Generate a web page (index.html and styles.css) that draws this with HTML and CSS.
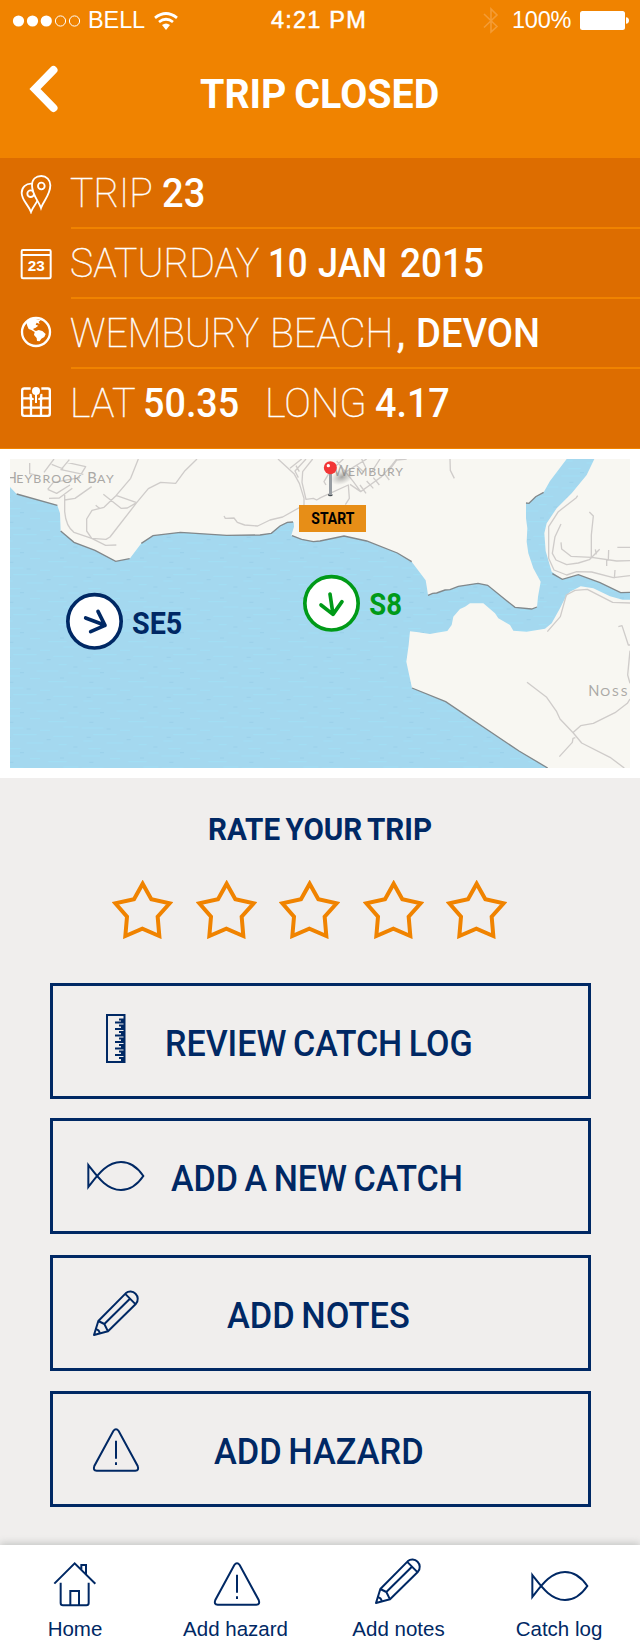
FILE: index.html
```html
<!DOCTYPE html>
<html lang="en">
<head>
<meta charset="utf-8">
<title>Trip closed</title>
<link rel="stylesheet" href="styles.css">
</head>
<body>
<svg class="defs" aria-hidden="true">
  <symbol id="star" viewBox="66 240 183 178"><path d="M158 251L184 298 239 310 203 350 208 408 157 386 106 408 111 350 76 310 132 298Z" fill="none" stroke="#f08300" stroke-width="12"/></symbol>
  <symbol id="pencil" viewBox="162 84 144 144"><g fill="none" stroke="currentColor" stroke-width="6" stroke-linejoin="round"><path d="M181 180L263 97A22 22 0 0 1 294 128L210 211 168 222ZM261 98L293 130M275 114L199 189M181 180L199 189 210 211M173 205Q184 206 185 217"/></g></symbol>
  <symbol id="hazard" viewBox="639 94 144 138"><g fill="none" stroke="currentColor" stroke-width="6"><path d="M703 106Q711 95 719 106L776 211Q781 225 769 225H653Q641 225 646 211ZM711 135V189M711 200V208"/></g></symbol>
  <symbol id="fish" viewBox="632 120 174 96"><path d="M636 135V201C662 168 690 126 734 126C766 126 786 146 801 168C786 190 766 210 734 210C690 210 662 168 636 135Z" fill="none" stroke="currentColor" stroke-width="6"/></symbol>
  <symbol id="home" viewBox="160 92 132 138"><path d="M164 160L225 99 287 160M245 118V104H259V131M183 157V218Q183 225 190 225H260Q267 225 267 218V157M212 225V182H238V225" fill="none" stroke="currentColor" stroke-width="6"/></symbol>
</svg>

<header class="top">
  <div class="status">
    <svg class="signal" width="70" height="14" viewBox="0 0 70 14"><g fill="#fff"><circle cx="6.500" cy="7" r="5.600"/><circle cx="20.500" cy="7" r="5.600"/><circle cx="34.300" cy="7" r="5.600"/></g><g fill="none" stroke="#fff"><circle cx="48.500" cy="7" r="5.100"/><circle cx="62.500" cy="7" r="5.100"/></g></svg>
    <span class="carrier">BELL</span>
    <svg class="wifi" width="24" height="18" viewBox="0 0 24 18"><g fill="none" stroke="#fff" stroke-width="2.800"><path d="M1 5.800Q12 -2.800 23 5.800M5 10Q12 4.600 19 10"/></g><path d="M8 13Q12 10 16 13L12 18Z" fill="#fff"/></svg>
    <span class="time">4:21 PM</span>
    <svg class="bluetooth" width="16" height="28" viewBox="0 0 16 28"><path d="M1 7L14 19.500 8 25V2L14 8 1 20.500" fill="none" stroke="#f49c35" stroke-width="1.600"/></svg>
    <span class="level">100%</span>
    <svg class="battery" width="50" height="19" viewBox="0 0 50 19"><rect width="45" height="19" rx="2.500" fill="#fff"/><path d="M46 6.200Q49 6.500 49 9.500T46 12.800Z" fill="#fff"/></svg>
  </div>
  <div class="titlebar">
    <svg class="back" width="32" height="50" viewBox="28 64 32 50"><path d="M53.500 70L35 89 53.500 108" fill="none" stroke="#fff" stroke-width="8" stroke-linecap="round"/></svg>
    <h1 class="title">TRIP CLOSED</h1>
  </div>
</header>

<section class="info">
  <div class="row">
    <svg class="row-icon i-pins" width="32" height="40" viewBox="60 57 96 120"><g fill="#dd6d00" stroke="#fff" stroke-width="5.500"><path d="M93 171C86 150 65 136 65 114C65 96 78 86 93 86C108 86 120 97 120 114C120 136 100 150 93 171Z"/><circle cx="92" cy="116" r="10"/><path d="M123 159C116 138 96 120 96 91C96 73 108 63 124 63C139 63 151 75 151 91C151 120 130 138 123 159Z"/><circle cx="124" cy="93" r="10"/></g></svg>
    <p class="row-text"><span class="w-trip">TRIP</span><b class="w-23">23</b></p>
  </div>
  <div class="row">
    <svg class="row-icon i-cal" width="32" height="32" viewBox="58 278 96 96"><g fill="none" stroke="#fff" stroke-width="6"><rect x="63" y="284" width="87" height="85" rx="4"/><path d="M63 299H150"/></g><text class="cal-num" x="81" y="348" textLength="51" lengthAdjust="spacingAndGlyphs">23</text></svg>
    <p class="row-text"><span class="w-sat">SATURDAY</span><b class="w-10">10</b><b class="w-jan">JAN</b><b class="w-2015">2015</b></p>
  </div>
  <div class="row">
    <svg class="row-icon i-globe" width="32" height="32" viewBox="57 482 96 96"><circle cx="105" cy="530" r="42" fill="none" stroke="#fff" stroke-width="7"/><path d="M76 502Q88 489 102 490L119 495 113 499 116 506 107 502 104 508 112 511 104 517 97 520 98 524 105 527 113 524 124 527 134 536 130 545 121 550 116 558 108 557 107 548 99 539 101 530 91 524 83 521 79 512Z" fill="#fff"/></svg>
    <p class="row-text"><span class="w-wem">WEMBURY</span><span class="w-beach">BEACH<i class="comma">,</i></span><b class="w-devon">DEVON</b></p>
  </div>
  <div class="row">
    <svg class="row-icon i-grid" width="32" height="32" viewBox="57 693 96 96"><g fill="none" stroke="#fff" stroke-width="7"><rect x="63.500" y="700.500" width="83" height="82" rx="6"/><path d="M63 730H147M63 758H147M90 716V783M120 716V783"/></g><path d="M89 694H121V716L111 738V747H99V738L89 716Z" fill="#dd6d00"/><circle cx="105" cy="708" r="12" fill="#fff"/><path d="M105 708V744" stroke="#fff" stroke-width="6"/><path d="M89 717V732H98M121 717V732H112" fill="none" stroke="#fff" stroke-width="6"/></svg>
    <p class="row-text"><span class="w-lat">LAT</span><b class="w-50">50.35</b><span class="w-long">LONG</span><b class="w-417">4.17</b></p>
  </div>
</section>

<section class="map-frame">
  <svg class="map" width="620" height="309" viewBox="30 42 1860 927">
    <defs>
      <pattern id="waves" width="240" height="120" patternUnits="userSpaceOnUse">
        <rect width="240" height="120" fill="#a4d8ef"/>
        <path d="M5 9H70M120 16H150M190 6H235M40 29H110M160 34H220M10 48H38M80 54H130M176 59H200M25 71H62M110 78H175M205 84H236M4 93H60M90 101H120M145 110H200" stroke="#a2dff6" stroke-width="3" fill="none"/>
        <path d="M80 12H92M20 37H32M140 44H152M60 83H72M220 66H232M180 99H192M28 112H40" stroke="#9ad0ea" stroke-width="3" fill="none"/>
      </pattern>
      <radialGradient id="shade"><stop offset="0" stop-color="#555" stop-opacity=".5"/><stop offset="1" stop-color="#777" stop-opacity="0"/></radialGradient>
    </defs>
    <rect x="30" y="42" width="1860" height="927" fill="url(#waves)"/>
    <g fill="#f8f7f2">
      <path d="M30 42V126L50 147 172 181 180 205 182 258 222 292 285 316 347 349 389 341 424 295 459 272 541 262 680 271 780 270 814 265 840 243 862 232 881 231 882 245 874 271 905 283 940 290 960 288 1032 273 1100 288 1192 324 1235 350 1277 406 1281 430 1284 451 1298 445 1310 444 1335 435 1350 434 1375 424 1434 415 1463 421 1520 467 1545 487 1595 492 1611 486 1614 455 1622 410 1600 370 1585 325 1580 290 1582 250 1578 220V174L1587 175 1607 155 1631 142 1650 108 1700 42Z"/>
      <path d="M1783 42L1760 90 1715 145 1670 190 1640 235 1633 265 1637 318 1655 380 1687 403 1735 389 1800 413 1862 443 1890 442V42Z"/>
      <path d="M1890 464L1868 464 1830 454 1780 430 1742 424 1710 440 1695 460 1680 490 1655 535 1635 551 1580 560 1540 557 1530 540 1495 520 1485 505 1450 475H1410L1395 485 1380 492 1360 515 1355 540 1342 558 1310 563 1290 567 1255 562 1230 559 1226 600 1219 650 1236 729 1337 770 1557 918 1643 969H1890Z"/>
    </g>
    <g fill="none" stroke="#82888b" stroke-width="4">
      <path d="M50 147L172 181M182 258L222 292 285 316 347 349 389 341M424 295L459 272 541 262 680 271 780 270 814 265 840 243 862 232 879 231M876 272L905 283 940 290 960 288 1032 273 1100 288 1192 324 1235 350M1284 451L1298 445 1310 444 1335 435 1350 434 1375 424 1434 415 1463 421 1520 467 1545 487 1595 492 1611 486M1578 174L1587 175 1607 155 1631 142M1657 386L1687 403 1735 389 1800 413 1862 443 1890 442M1236 729L1337 770 1557 918 1643 969"/>
    </g>
    <g fill="none" stroke="#cfccca" stroke-width="4" stroke-linejoin="round">
      <path d="M415 42L392 100 348 152 312 187 276 196 260 222V258L275 280 318 283 330 276 410 173 445 131 482 112 527 115 555 77 591 42M275 280L317 301 349 300M310 148L363 190 382 189 410 173 350 152M287 181L300 191"/>
      <path d="M194 150V200Q198 245 222 262L275 280M194 165L225 160 275 125M147 160L178 159 217 130M162 42L132 82M208 44L183 74 250 88M155 58L190 72M200 52L257 65 243 88M89 54V86L115 92M143 133L160 112 240 98M143 133L170 145 210 120"/>
      <path d="M672 213L676 220 702 219 712 232 734 240 773 243 810 225 848 216 912 180M834 42L882 86 898 115 912 160 912 180M895 98L885 78 918 42M870 70L905 42M898 80L888 62M938 42L908 80 906 112 918 163 940 160 950 165 962 158M978 120L972 110 985 88 1005 65 1030 42M962 158L1045 120 1048 160 1036 179M1010 48L1060 110 1082 140M1030 85L1100 42M1050 118L1082 140 1110 120 1145 95 1176 60 1190 42M1080 120L1098 145M1100 108L1120 130M1120 98L1138 120M1150 82L1168 105M1085 42L1098 70M1068 60L1092 82M1140 42L1112 85M1166 78L1190 45 1220 42M1350 42L1351 76 1363 100"/>
      <path d="M1733 152L1729 158 1675 200 1646 245V340L1662 375 1700 390 1730 380 1775 381 1840 398 1890 392M1683 237L1665 275 1657 325 1668 345 1700 359 1735 354 1768 344 1799 313M1683 292L1685 312 1713 334 1775 337 1850 348 1890 347M1768 201L1780 213 1774 270 1774 335M1786 313L1789 328M1826 315L1825 345 1820 346 1820 363M1845 375L1843 400M1852 307H1890M1642 560L1681 515 1699 450 1725 436 1762 433 1838 472 1890 474M1855 545L1866 542 1885 600H1890M1890 617L1883 690 1890 715M1581 712L1640 757 1670 800 1680 822 1720 864 1745 894 1830 937 1873 969M1720 862L1742 842 1780 835 1845 803 1882 775 1890 762M1726 878L1719 880 1717 892 1678 935"/>
    </g>
    <g class="place">
      <text x="17" y="114" font-size="44">H</text><text x="49" y="114" font-size="37" textLength="195">EYBROOK</text><text x="262" y="114" font-size="44">B</text><text x="291" y="114" font-size="37" textLength="50">AY</text>
      <text x="1000" y="94" font-size="44">W</text><text x="1044" y="94" font-size="37" textLength="165">EMBURY</text>
      <text x="1765" y="753" font-size="44">N</text><text x="1801" y="753" font-size="37" textLength="81">OSS</text>
    </g>
    <ellipse cx="1026" cy="96" rx="36" ry="22" fill="url(#shade)" transform="rotate(-20 1026 96)"/>
    <ellipse cx="991" cy="150" rx="7" ry="4" fill="#444b50"/>
    <rect x="987" y="84" width="9" height="66" fill="#989da2"/>
    <circle cx="991" cy="68" r="19.500" fill="#f23636"/><circle cx="985" cy="62" r="5" fill="#fff"/>
    <rect x="897" y="180" width="201" height="81" fill="#e78e17"/>
    <text class="start" x="934" y="238" textLength="129" lengthAdjust="spacingAndGlyphs">START</text>
    <g fill="none" stroke="#002864" stroke-width="11" stroke-linecap="round" stroke-linejoin="round"><circle cx="283.500" cy="529" r="80" fill="#fff"/><path d="M257 519L315 541M294 499L315 541 272 560"/></g>
    <text class="wind navy" x="396" y="567" textLength="151" lengthAdjust="spacingAndGlyphs">SE5</text>
    <g fill="none" stroke="#009a18" stroke-width="11" stroke-linecap="round" stroke-linejoin="round"><circle cx="994.500" cy="475" r="80" fill="#fff"/><path d="M990 447L999 508M963 480L999 508 1026 470"/></g>
    <text class="wind green" x="1108" y="510" textLength="98" lengthAdjust="spacingAndGlyphs">S8</text>
  </svg>
</section>

<main class="actions">
  <h2 class="rate">RATE YOUR TRIP</h2>
  <div class="stars">
    <svg><use href="#star"/></svg><svg><use href="#star"/></svg><svg><use href="#star"/></svg><svg><use href="#star"/></svg><svg><use href="#star"/></svg>
  </div>
  <div class="buttons">
    <a class="btn b-review"><svg class="i-ruler" width="20" height="49" viewBox="0 0 20 49"><path d="M1 1H18.500V48H1Z" fill="none" stroke="#002864" stroke-width="2"/><path d="M13 5.500H18M9 8.500H18M13 11.500H18M9 15H18M13 18H18M9 21.500H18M13 24.500H18M9 28H18M13 31H18M9 34.500H18M13 37.500H18M9 41H18M13 44H18M15 7H18M15 13.300H18M15 19.700H18M15 26.300H18M15 33H18M15 39.300H18M15 46H18" stroke="#002864" stroke-width="1.800"/></svg><span>REVIEW CATCH LOG</span></a>
    <a class="btn b-catch"><svg class="i-fish"><use href="#fish"/></svg><span>ADD A NEW CATCH</span></a>
    <a class="btn b-notes"><svg class="i-pencil"><use href="#pencil"/></svg><span>ADD NOTES</span></a>
    <a class="btn b-hazard"><svg class="i-hazard"><use href="#hazard"/></svg><span>ADD HAZARD</span></a>
  </div>
</main>

<nav class="tabs">
  <a class="tab t-home"><svg class="n-home"><use href="#home"/></svg><span>Home</span></a>
  <a class="tab t-hazard"><svg class="n-hazard"><use href="#hazard"/></svg><span>Add hazard</span></a>
  <a class="tab t-notes"><svg class="n-pencil"><use href="#pencil"/></svg><span>Add notes</span></a>
  <a class="tab t-log"><svg class="n-fish"><use href="#fish"/></svg><span>Catch log</span></a>
</nav>
</body>
</html>
```
FILE: styles.css
```css
* { box-sizing: border-box; }
body {
  margin: 0;
  width: 640px;
  height: 1643px;
  display: flex;
  flex-direction: column;
  background: #f0eeed;
  font-family: Roboto, "Liberation Sans", sans-serif;
  overflow: hidden;
}
svg { display: block; flex: none; }
.defs { position: absolute; width: 0; height: 0; }
h1, h2, p { margin: 0; }

.top { height: 158px; background: #f08300; color: #fff; flex: none; }
.status {
  height: 41px;
  display: flex;
  align-items: center;
  padding-left: 12px;
  font: 23.5px/41px "Liberation Sans", Arial, sans-serif;
  white-space: nowrap;
}
.carrier { width: 66px; padding-left: 6px; letter-spacing: -0.1px; }
.wifi { margin-left: 6px; }
.time { width: 96px; margin-left: 93px; font-size: 23.5px; letter-spacing: 1.2px; -webkit-text-stroke: 0.5px #fff; }
.bluetooth { margin-left: 116px; }
.level { width: 67px; padding-left: 13px; font-size: 23.5px; letter-spacing: -0.2px; }
.battery { margin-left: 14px; }

.title, .rate, .btn span, .row-text span, .row-text b { transform-origin: 0 50%; }

.titlebar { height: 117px; display: flex; align-items: flex-start; padding: 23px 0 0 28px; }
.title { margin: 6px 0 0 140px; font-size: 41px; line-height: 48px; font-weight: 700; transform: scaleX(0.96); word-spacing: -2px; white-space: nowrap; }

.info { height: 291px; background: #dd6d00; border-bottom: 1px solid #f08300; flex: none; color: #fff; }
.row { height: 70px; display: flex; align-items: center; padding-left: 20px; }
.row-icon { width: 32px; margin-right: 18px; }
.i-pins, .i-cal { margin-top: 2px; }
.i-globe, .i-grid { margin-bottom: 2px; }
.row-text {
  flex: 1;
  height: 71px;
  margin-left: 1px;
  border-bottom: 2px solid #f08300;
  display: flex;
  font-size: 41px;
  line-height: 71px;
  font-weight: 100;
  white-space: nowrap;
}
.row:last-child .row-text { border-bottom-color: transparent; }
.row-text b { font-weight: 500; transform: scaleX(0.93); }
.row-text span { transform: scaleX(0.955); -webkit-text-stroke: 0.4px #fff; }
.row-text span, .row-text b { flex: none; }
.row-text > :first-child { margin-left: -1px; }
.row-text .w-trip { width: 92px; }
.row-text .w-sat { width: 198px; }
.row-text .w-10 { width: 50px; transform: scaleX(0.85); }
.row-text .w-jan { width: 82px; transform: scaleX(0.88); }
.row-text .w-2015 { transform: scaleX(0.9); }
.row-text .w-wem { width: 200px; }
.row-text .w-beach { width: 146px; transform: scaleX(0.965); }
.row-text .w-lat { width: 73px; transform: scaleX(0.965); }
.row-text .w-50 { width: 122px; transform: scaleX(0.92); }
.row-text .w-long { width: 110px; transform: scaleX(0.975); }
.row-text .w-417 { transform: scaleX(0.92); }
.comma { font-style: normal; font-weight: 400; margin-left: 4px; }
.cal-num { font: 700 42px "Liberation Sans", Arial, sans-serif; fill: #fff; }

.map-frame { height: 329px; background: #fff; padding: 10px; flex: none; }
.place { fill: #aaa8a5; font-family: Lato, sans-serif; }
.start { font-size: 47px; font-weight: 700; fill: #000; }
.wind { font-size: 92px; font-weight: 700; }
.navy { fill: #002864; }
.green { fill: #009a18; }

.actions { flex: 1; color: #002864; }
.rate { padding-left: 208px; margin-top: 34px; font-size: 31px; line-height: 36px; font-weight: 700; transform: scaleX(0.955); transform-origin: 208px 50%; word-spacing: -2px; white-space: nowrap; }
.stars { display: flex; gap: 22.5px; padding: 32px 0 0 112px; }
.stars svg { width: 61px; height: 59.3px; }
.buttons { padding: 43.7px 0 0 50px; }
.btn {
  width: 541px;
  height: 116px;
  border: 3px solid #002864;
  display: flex;
  align-items: flex-start;
  font-size: 36px;
  line-height: 42px;
  font-weight: 500;
  white-space: nowrap;
}
.btn span { margin-top: 37px; word-spacing: -2px; transform: scaleX(0.945); }
.b-review { margin-bottom: 19px; }
.b-catch { margin-bottom: 21px; }
.b-notes { margin-bottom: 20px; }
.btn.b-notes span, .btn.b-hazard span { transform: scaleX(0.955); }
.i-ruler { margin: 28px 39px 0 53px; }
.i-fish { width: 58px; height: 32px; margin: 39px 26px 0 34px; }
.i-pencil { width: 48px; height: 48px; margin: 31px 87px 0 39px; }
.i-hazard { width: 48px; height: 46px; margin: 33px 74px 0 39px; }

.tabs {
  height: 98px;
  flex: none;
  display: grid;
  grid-template-columns: 150px 171px 155px 166px;
  background: #fff;
  color: #002864;
  box-shadow: 0 -2px 7px rgba(100, 110, 105, 0.3);
  font: 20.5px/24px "Liberation Sans", Arial, sans-serif;
}
.tab { display: grid; grid-template-rows: 72px 24px; justify-items: center; align-items: start; white-space: nowrap; }
.n-home { width: 44px; height: 46px; margin-top: 16px; }
.n-hazard { width: 48px; height: 46px; margin: 16px 0 0 3px; }
.n-pencil { width: 48px; height: 48px; margin: 12px 2px 0 0; }
.n-fish { width: 58px; height: 32px; margin: 25px 0 0 2px; }
```
